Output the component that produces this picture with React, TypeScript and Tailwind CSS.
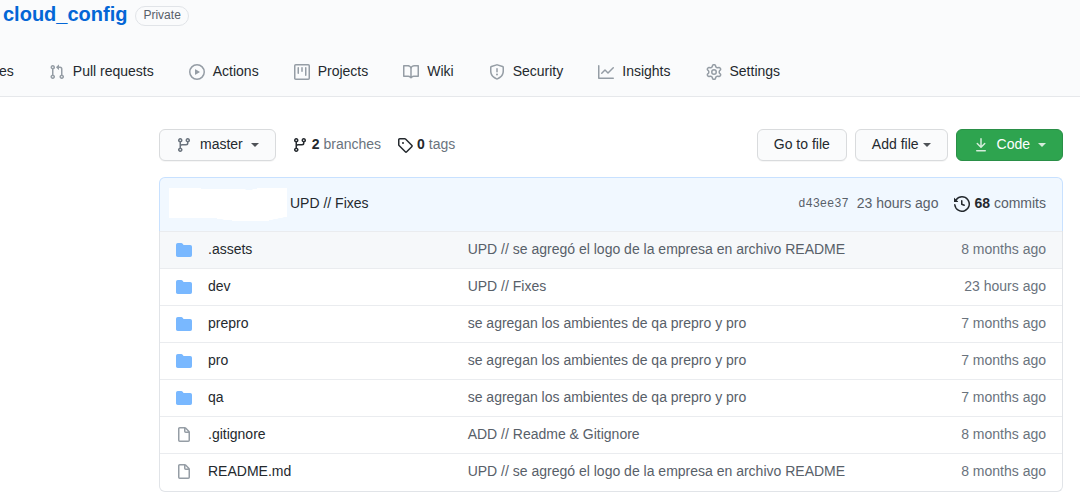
import type { ReactNode } from "react";

const paths = {
  pull: "M7.177 3.073L9.573.677A.25.25 0 0110 .854v4.792a.25.25 0 01-.427.177L7.177 3.427a.25.25 0 010-.354zM3.75 2.5a.75.75 0 100 1.5.75.75 0 000-1.5zm-2.25.75a2.25 2.25 0 113 2.122v5.256a2.251 2.251 0 11-1.5 0V5.372A2.25 2.25 0 011.5 3.25zM11 2.5h-1V4h1a1 1 0 011 1v5.628a2.251 2.251 0 101.5 0V5A2.5 2.5 0 0011 2.5zm1 10.25a.75.75 0 111.5 0 .75.75 0 01-1.5 0zM3.75 12a.75.75 0 100 1.5.75.75 0 000-1.5z",
  play: "M1.5 8a6.5 6.5 0 1113 0 6.5 6.5 0 01-13 0zM8 0a8 8 0 100 16A8 8 0 008 0zM6.379 5.227A.25.25 0 006 5.442v5.117a.25.25 0 00.379.214l4.264-2.559a.25.25 0 000-.428L6.379 5.227z",
  project: "M1.75 0A1.75 1.75 0 000 1.75v12.5C0 15.216.784 16 1.75 16h12.5A1.75 1.75 0 0016 14.25V1.75A1.75 1.75 0 0014.25 0H1.75zM1.5 1.75a.25.25 0 01.25-.25h12.5a.25.25 0 01.25.25v12.5a.25.25 0 01-.25.25H1.75a.25.25 0 01-.25-.25V1.75zM11.75 3a.75.75 0 00-.75.75v7.5a.75.75 0 001.5 0v-7.5a.75.75 0 00-.75-.75zm-8.25.75a.75.75 0 011.5 0v5.5a.75.75 0 01-1.5 0v-5.5zM8 3a.75.75 0 00-.75.75v3.5a.75.75 0 001.5 0v-3.5A.75.75 0 008 3z",
  book: "M0 1.75A.75.75 0 01.75 1h4.253c1.227 0 2.317.59 3 1.501A3.744 3.744 0 0111.006 1h4.245a.75.75 0 01.75.75v10.5a.75.75 0 01-.75.75h-4.507a2.25 2.25 0 00-1.591.659l-.622.621a.75.75 0 01-1.06 0l-.622-.621A2.25 2.25 0 005.258 13H.75a.75.75 0 01-.75-.75V1.75zm8.755 3a2.25 2.25 0 012.25-2.25H14.5v9h-3.757c-.71 0-1.4.201-1.992.572l.004-7.322zm-1.504 7.324l.004-5.073-.002-2.253A2.25 2.25 0 005.003 2.5H1.5v9h3.757a3.75 3.75 0 011.994.574z",
  shield: "M7.467.133a1.75 1.75 0 011.066 0l5.25 1.68A1.75 1.75 0 0115 3.48V7c0 1.566-.32 3.182-1.303 4.682-.983 1.498-2.585 2.813-5.032 3.855a1.7 1.7 0 01-1.33 0c-2.447-1.042-4.049-2.357-5.032-3.855C1.32 10.182 1 8.566 1 7V3.48a1.75 1.75 0 011.217-1.667l5.25-1.68zm.61 1.429a.25.25 0 00-.153 0l-5.25 1.68a.25.25 0 00-.174.238V7c0 1.358.275 2.666 1.057 3.86.784 1.194 2.121 2.34 4.366 3.297a.2.2 0 00.154 0c2.245-.956 3.582-2.104 4.366-3.298C13.225 9.666 13.5 8.36 13.5 7V3.48a.25.25 0 00-.174-.237l-5.25-1.68zM9 10.5a1 1 0 11-2 0 1 1 0 012 0zm-.25-5.75a.75.75 0 10-1.5 0v3a.75.75 0 001.5 0v-3z",
  graph: "M1.5 1.75a.75.75 0 00-1.5 0v12.5c0 .414.336.75.75.75h14.5a.75.75 0 000-1.5H1.5V1.75zm14.28 2.53a.75.75 0 00-1.06-1.06L10 7.94 7.53 5.47a.75.75 0 00-1.06 0L3.22 8.72a.75.75 0 001.06 1.06L7 7.06l2.47 2.47a.75.75 0 001.06 0l5.25-5.25z",
  gear: "M7.429 1.525a6.593 6.593 0 011.142 0c.036.003.108.036.137.146l.289 1.105c.147.56.55.967.997 1.189.174.086.341.183.501.29.417.278.97.423 1.53.27l1.102-.303c.11-.03.175.016.195.046.219.31.41.641.573.989.014.031.022.11-.059.19l-.815.806c-.411.406-.562.957-.53 1.456a4.588 4.588 0 010 .582c-.032.499.119 1.05.53 1.456l.815.806c.08.08.073.159.059.19a6.494 6.494 0 01-.573.99c-.02.029-.086.074-.195.045l-1.103-.303c-.559-.153-1.112-.008-1.529.27-.16.107-.327.204-.5.29-.449.222-.851.628-.998 1.189l-.289 1.105c-.029.11-.101.143-.137.146a6.613 6.613 0 01-1.142 0c-.036-.003-.108-.037-.137-.146l-.289-1.105c-.147-.56-.55-.967-.997-1.189a4.502 4.502 0 01-.501-.29c-.417-.278-.97-.423-1.53-.27l-1.102.303c-.11.03-.175-.016-.195-.046a6.492 6.492 0 01-.573-.989c-.014-.031-.022-.11.059-.19l.815-.806c.411-.406.562-.957.53-1.456a4.587 4.587 0 010-.582c.032-.499-.119-1.05-.53-1.456l-.815-.806c-.08-.08-.073-.159-.059-.19a6.44 6.44 0 01.573-.99c.02-.029.086-.075.195-.045l1.103.303c.559.153 1.112.008 1.529-.27.16-.107.327-.204.5-.29.449-.222.851-.628.998-1.189l.289-1.105c.029-.11.101-.143.137-.146zM8 0c-.236 0-.47.01-.701.03-.743.065-1.29.615-1.458 1.261l-.29 1.106c-.017.066-.078.158-.211.224a5.994 5.994 0 00-.668.386c-.123.082-.233.09-.3.071L3.27 2.776c-.644-.177-1.392.02-1.82.63a7.977 7.977 0 00-.704 1.217c-.315.675-.111 1.422.363 1.891l.815.806c.05.048.098.147.088.294a6.084 6.084 0 000 .772c.01.147-.038.246-.088.294l-.815.806c-.474.469-.678 1.216-.363 1.891.2.428.436.835.704 1.218.428.609 1.176.806 1.82.63l1.103-.303c.066-.019.176-.011.299.071.213.143.436.272.668.386.133.066.194.158.212.224l.289 1.106c.169.646.715 1.196 1.458 1.26a8.094 8.094 0 001.402 0c.743-.064 1.29-.614 1.458-1.26l.29-1.106c.017-.066.078-.158.211-.224a5.98 5.98 0 00.668-.386c.123-.082.233-.09.3-.071l1.102.302c.644.177 1.392-.02 1.82-.63.268-.382.505-.789.704-1.217.315-.675.111-1.422-.364-1.891l-.814-.806c-.05-.048-.098-.147-.088-.294a6.1 6.1 0 000-.772c-.01-.147.039-.246.088-.294l.814-.806c.475-.469.679-1.216.364-1.891a7.992 7.992 0 00-.704-1.218c-.428-.609-1.176-.806-1.82-.63l-1.103.303c-.066.019-.176.011-.299-.071a5.991 5.991 0 00-.668-.386c-.133-.066-.194-.158-.212-.224L10.16 1.29C9.99.645 9.444.095 8.701.031A8.094 8.094 0 008 0zm1.5 8a1.5 1.5 0 11-3 0 1.5 1.5 0 013 0zM11 8a3 3 0 11-6 0 3 3 0 016 0z",
  branch: "M11.75 2.5a.75.75 0 100 1.5.75.75 0 000-1.5zm-2.25.75a2.25 2.25 0 113 2.122V6A2.5 2.5 0 0110 8.5H6a1 1 0 00-1 1v1.128a2.251 2.251 0 11-1.5 0V5.372a2.25 2.25 0 111.5 0v1.836A2.492 2.492 0 016 7h4a1 1 0 001-1v-.628A2.25 2.25 0 019.5 3.25zM4.25 12a.75.75 0 100 1.5.75.75 0 000-1.5zM3.5 3.25a.75.75 0 111.5 0 .75.75 0 01-1.5 0z",
  tag: "M2.5 7.775V2.75a.25.25 0 01.25-.25h5.025a.25.25 0 01.177.073l6.25 6.25a.25.25 0 010 .354l-5.025 5.025a.25.25 0 01-.354 0l-6.25-6.25a.25.25 0 01-.073-.177zm-1.5 0V2.75C1 1.784 1.784 1 2.75 1h5.025c.464 0 .91.184 1.238.513l6.25 6.25a1.75 1.75 0 010 2.474l-5.026 5.026a1.75 1.75 0 01-2.474 0l-6.25-6.25A1.75 1.75 0 011 7.775zM6 5a1 1 0 100 2 1 1 0 000-2z",
  download: "M7.47 10.78a.75.75 0 001.06 0l3.75-3.75a.75.75 0 00-1.06-1.06L8.75 8.44V1.75a.75.75 0 00-1.5 0v6.69L4.78 5.97a.75.75 0 00-1.06 1.06l3.75 3.75zM3.75 13a.75.75 0 000 1.5h8.5a.75.75 0 000-1.5h-8.5z",
  history: "M1.643 3.143L.427 1.927A.25.25 0 000 2.104V5.75c0 .138.112.25.25.25h3.646a.25.25 0 00.177-.427L2.715 4.215a6.5 6.5 0 11-1.18 4.458.75.75 0 10-1.493.154 8.001 8.001 0 101.6-5.684zM7.75 4a.75.75 0 01.75.75v2.992l2.028.812a.75.75 0 01-.557 1.392l-2.5-1A.75.75 0 017 8.25v-3.5A.75.75 0 017.75 4z",
  folder: "M1.75 1A1.75 1.75 0 000 2.75v10.5C0 14.216.784 15 1.75 15h12.5A1.75 1.75 0 0016 13.25v-8.5A1.75 1.75 0 0014.25 3h-6.5a.25.25 0 01-.2-.1l-.9-1.2c-.33-.44-.85-.7-1.4-.7h-3.5z",
  file: "M3.75 1.5a.25.25 0 00-.25.25v11.5c0 .138.112.25.25.25h8.5a.25.25 0 00.25-.25V6H9.75A1.75 1.75 0 018 4.25V1.5H3.75zm5.75.56v2.19c0 .138.112.25.25.25h2.19L9.5 2.06zM2 1.75C2 .784 2.784 0 3.75 0h5.086c.464 0 .909.184 1.237.513l3.414 3.414c.329.328.513.773.513 1.237v8.086A1.75 1.75 0 0112.25 15h-8.5A1.75 1.75 0 012 13.25V1.75z",
};

type IconName = keyof typeof paths;

function Icon({ name, className = "" }: { name: IconName; className?: string }) {
  return (
    <svg aria-hidden="true" viewBox="0 0 16 16" className={`mt-0.5 size-4 shrink-0 fill-current ${className}`}>
      <path fillRule="evenodd" d={paths[name]} />
    </svg>
  );
}

function Caret() {
  return (
    <svg aria-hidden="true" viewBox="0 0 8 4" className="mt-0.5 h-1 w-2 shrink-0 fill-current opacity-80">
      <path d="M0 0h8L4 4z" />
    </svg>
  );
}

function Button({ children, className = "" }: { children: ReactNode; className?: string }) {
  return (
    <button
      type="button"
      className={`flex h-8 items-center rounded-md border border-[#d9dbdd] bg-[#fafbfc] px-4 pb-0.5 leading-5 shadow-[0_1px_0_rgba(27,31,35,0.04)] ${className}`}
    >
      {children}
    </button>
  );
}

const tabs: { icon: IconName; label: string }[] = [
  { icon: "pull", label: "Pull requests" },
  { icon: "play", label: "Actions" },
  { icon: "project", label: "Projects" },
  { icon: "book", label: "Wiki" },
  { icon: "shield", label: "Security" },
  { icon: "graph", label: "Insights" },
  { icon: "gear", label: "Settings" },
];

const files: { icon: IconName; name: string; message: string; age: string }[] = [
  { icon: "folder", name: ".assets", message: "UPD // se agregó el logo de la empresa en archivo README", age: "8 months ago" },
  { icon: "folder", name: "dev", message: "UPD // Fixes", age: "23 hours ago" },
  { icon: "folder", name: "prepro", message: "se agregan los ambientes de qa prepro y pro", age: "7 months ago" },
  { icon: "folder", name: "pro", message: "se agregan los ambientes de qa prepro y pro", age: "7 months ago" },
  { icon: "folder", name: "qa", message: "se agregan los ambientes de qa prepro y pro", age: "7 months ago" },
  { icon: "file", name: ".gitignore", message: "ADD // Readme & Gitignore", age: "8 months ago" },
  { icon: "file", name: "README.md", message: "UPD // se agregó el logo de la empresa en archivo README", age: "8 months ago" },
];

export default function App() {
  return (
    <div className="min-h-screen overflow-x-hidden bg-white font-['Liberation_Sans',Arial,sans-serif] text-sm leading-5 text-[#24292e]">
      <header className="border-b border-[#e6e8eb] bg-[#fafbfc]">
        <div className="flex items-center gap-2 pl-[3px]">
          <h1 className="text-xl leading-7 font-bold text-[#0366d6]">
            <a href="#repo">cloud_config</a>
          </h1>
          <span className="mt-1 rounded-full border border-[#e1e4e8] px-[7px] pb-0.5 text-xs leading-4 text-[#586069]">
            Private
          </span>
        </div>
        <nav aria-label="Repository" className="-ml-px flex items-center gap-[35px] pt-[33px] pb-[15px]">
          <a href="#issues">es</a>
          {tabs.map((t) => (
            <a key={t.label} href={`#${t.icon}`} className="flex items-center gap-2">
              <Icon name={t.icon} className="text-[#959da5]" />
              {t.label}
            </a>
          ))}
        </nav>
      </header>

      <main className="pt-8 pr-[17px] pb-2 pl-[159px]">
        <div className="flex items-center justify-between">
          <div className="flex items-center gap-4">
            <Button className="gap-2">
              <Icon name="branch" className="text-[#6a737d]" />
              master
              <Caret />
            </Button>
            <a href="#branches" className="flex items-center gap-1 pb-0.5">
              <Icon name="branch" />
              <span className="text-[#6a737d]">
                <strong className="text-[#24292e]">2</strong> branches
              </span>
            </a>
            <a href="#tags" className="flex items-center gap-1 pb-0.5">
              <Icon name="tag" />
              <span className="text-[#6a737d]">
                <strong className="text-[#24292e]">0</strong> tags
              </span>
            </a>
          </div>
          <div className="flex items-center gap-2">
            <Button>Go to file</Button>
            <Button className="gap-1">
              Add file
              <Caret />
            </Button>
            <button
              type="button"
              className="flex h-8 items-center gap-2 rounded-md border border-[#2a8f47] bg-[#2ea44f] px-4 pb-0.5 leading-5 text-white"
            >
              <Icon name="download" className="opacity-80" />
              Code
              <Caret />
            </button>
          </div>
        </div>

        <section className="mt-4">
          <div className="flex items-center justify-between rounded-t-md border border-b-0 border-[#c8e1ff] bg-[#f1f8ff] pt-2.5 pr-4 pb-2.5 pl-[9px]">
            <div className="flex items-center gap-[3px]">
              <svg aria-hidden="true" viewBox="0 0 118 33" className="h-[33px] w-[118px] fill-white">
                <path d="M0 0h32v1h44l1 1h6l1-1h4V0h30v29h-3l-2 1h-3l-2 1h-3l-2 1h-3v1H63v-1h-8l-2-1h-5v-1H0z" />
              </svg>
              <a href="#commit" className="pb-1">UPD // Fixes</a>
            </div>
            <div className="flex items-center pb-1 text-[#586069]">
              <a href="#sha" className="mt-0.5 mr-2 font-['Liberation_Mono',monospace] text-xs leading-5">d43ee37</a>
              <span className="mr-4">23 hours ago</span>
              <a href="#commits" className="flex items-center gap-1">
                <Icon name="history" className="text-[#24292e]" />
                <span>
                  <strong className="text-[#24292e]">68</strong> commits
                </span>
              </a>
            </div>
          </div>
          <div className="overflow-hidden rounded-b-md border border-t-0 border-[#e1e4e8] pb-px">
            <table className="w-full table-fixed border-collapse">
              <tbody>
                {files.map((f, i) => (
                  <tr key={f.name} className={`border-t border-[#eaecef] ${i === 0 ? "bg-[#f6f8fa]" : ""}`}>
                    <th scope="row" className="w-[34%] pt-[7px] pb-[9px] pl-4 text-left font-normal">
                      <a href={`#${f.name}`} className="flex items-center gap-4">
                        <Icon name={f.icon} className={f.icon === "folder" ? "text-[#79b8ff]" : "text-[#959da5]"} />
                        {f.name}
                      </a>
                    </th>
                    <td className="truncate pt-[7px] pb-[9px] pl-px text-[#586069]">{f.message}</td>
                    <td className="w-[140px] pt-[7px] pr-4 pb-[9px] text-right text-[#6a737d]">{f.age}</td>
                  </tr>
                ))}
              </tbody>
            </table>
          </div>
        </section>
      </main>
    </div>
  );
}
